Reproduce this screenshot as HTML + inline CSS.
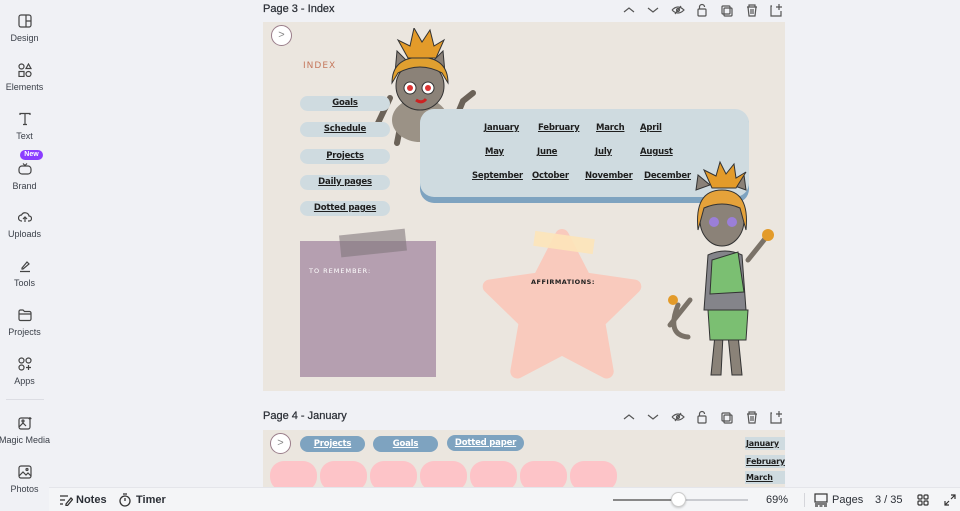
<!DOCTYPE html>
<html><head><meta charset="utf-8"><style>
*{margin:0;padding:0;box-sizing:border-box}
body{width:960px;height:511px;background:#f0f1f5;font-family:"Liberation Sans",sans-serif;position:relative;overflow:hidden;color:#2b2f36}
.abs{position:absolute}
.side{position:absolute;left:-5px;width:59px;text-align:center;font-size:9px;color:#3a3f48;white-space:nowrap}
.side svg{display:block;margin:0 auto 5px}
.hand{font-family:"DejaVu Sans",sans-serif;font-weight:bold;text-decoration:underline;color:#1e1e1e;letter-spacing:-.2px}
.pill{position:absolute;left:300px;width:90px;height:15px;border-radius:8px;background:#cfdbe0;font-size:8.5px;text-align:center;line-height:15px}
.m{position:absolute;font-size:8.5px}
.pink{position:absolute;top:461px;width:47px;height:30px;border-radius:14px;background:#fdc4c8}
.ttl{position:absolute;left:263px;font-size:11px;color:#2b2f36;-webkit-text-stroke:.25px #2b2f36}
</style></head><body>
<!-- sidebar -->
<div class="side" style="top:14px"><svg width="14" height="14" viewBox="0 0 14 14" fill="none" stroke="#444" stroke-width="1.2"><rect x="1" y="1" width="12" height="12" rx="2"/><path d="M8 1v12M8 7h5"/></svg>Design</div>
<div class="side" style="top:63px"><svg width="14" height="14" viewBox="0 0 14 14" fill="none" stroke="#444" stroke-width="1.2"><circle cx="3.5" cy="3.5" r="2.5"/><path d="M10.5 1l2.5 4.5h-5z"/><rect x="1" y="8.5" width="5" height="5"/><circle cx="10.5" cy="11" r="2.5"/></svg>Elements</div>
<div class="side" style="top:112px"><svg width="14" height="14" viewBox="0 0 14 14" fill="none" stroke="#444" stroke-width="1.2"><path d="M2 3V1.5h10V3M7 1.5v11M5 12.5h4"/></svg>Text</div>
<div class="abs" style="left:20px;top:150px;width:23px;height:10px;border-radius:5px;background:#8b3dff;color:#fff;font-size:7px;font-weight:bold;text-align:center;line-height:10px">New</div>
<div class="side" style="top:162px"><svg width="14" height="14" viewBox="0 0 14 14" fill="none" stroke="#444" stroke-width="1.2"><rect x="1" y="4" width="12" height="8" rx="3"/><path d="M5 1.5l2 2 2-2"/></svg>Brand</div>
<div class="side" style="top:210px"><svg width="14" height="14" viewBox="0 0 14 14" fill="none" stroke="#444" stroke-width="1.2"><path d="M4 11H3.5a3 3 0 0 1 0-6 4 4 0 0 1 7.5 1 2.5 2.5 0 0 1 0 5H10M7 12V7M5 9l2-2 2 2"/></svg>Uploads</div>
<div class="side" style="top:259px"><svg width="14" height="14" viewBox="0 0 14 14" fill="none" stroke="#444" stroke-width="1.2"><path d="M4 9l5-6 2 2-6 5H4zM2 12.5h10"/></svg>Tools</div>
<div class="side" style="top:308px"><svg width="14" height="14" viewBox="0 0 14 14" fill="none" stroke="#444" stroke-width="1.2"><path d="M1 3.5a1.5 1.5 0 0 1 1.5-1.5H5l1.5 1.5h5A1.5 1.5 0 0 1 13 5v6a1.5 1.5 0 0 1-1.5 1.5h-9A1.5 1.5 0 0 1 1 11zM1 6h12"/></svg>Projects</div>
<div class="side" style="top:357px"><svg width="14" height="14" viewBox="0 0 14 14" fill="none" stroke="#444" stroke-width="1.2"><circle cx="3.5" cy="3.5" r="2.5"/><circle cx="10.5" cy="3.5" r="2.5"/><circle cx="3.5" cy="10.5" r="2.5"/><path d="M10.5 8v5M8 10.5h5"/></svg>Apps</div>
<div class="abs" style="left:6px;top:399px;width:38px;height:1px;background:#dcdde3"></div>
<div class="side" style="top:416px"><svg width="14" height="14" viewBox="0 0 14 14" fill="none" stroke="#444" stroke-width="1.2"><rect x="1" y="2" width="11" height="11" rx="2"/><path d="M1 11l4-4 3 3M12 1v3M10.5 2.5h3"/><circle cx="5" cy="5" r="1"/></svg>Magic Media</div>
<div class="side" style="top:465px"><svg width="14" height="14" viewBox="0 0 14 14" fill="none" stroke="#444" stroke-width="1.2"><rect x="1" y="1" width="12" height="12" rx="2"/><path d="M1 11l4-4 3 3 2-2 3 3"/><circle cx="9" cy="4.5" r="1"/></svg>Photos</div>

<!-- page 3 header -->
<div class="ttl" style="top:3px">Page 3 - Index</div>
<svg class="abs" style="left:622px;top:3px" width="160" height="14" viewBox="0 0 160 14" fill="none" stroke="#555" stroke-width="1.2">
<path d="M2 9l5-4 5 4M26 5l5 4 5-4"/>
<path d="M50 7q6-6 12 0q-6 6-12 0M53 11l6-8"/><circle cx="56" cy="7" r="1.5"/>
<rect x="76" y="6" width="8" height="7" rx="1"/><path d="M77.5 6V4a2.5 2.5 0 0 1 5 0"/>
<rect x="100" y="3" width="8" height="8" rx="1"/><rect x="102" y="5" width="8" height="8" rx="1"/>
<path d="M125 4h10M127 4V2h6v2M126 4l1 9h6l1-9M129 6v5M131 6v5"/>
<path d="M150 3h-1v10h10V8M154 4h6M157 1v6"/>
</svg>

<!-- page 3 canvas -->
<div class="abs" style="left:263px;top:22px;width:522px;height:369px;background:#ebe6df"></div>
<div class="abs" style="left:271px;top:25px;width:21px;height:21px;border-radius:50%;border:1px solid #9a7d8a;background:#fff;color:#888;font-size:11px;text-align:center;line-height:19px">&gt;</div>
<div class="abs" style="left:303px;top:61px;font-size:9px;color:#c5785d;letter-spacing:1px;font-family:'DejaVu Sans',sans-serif">INDEX</div>

<!-- character 1 -->
<svg class="abs" style="left:370px;top:28px" width="110" height="125" viewBox="0 0 110 125">
<path d="M20 70l-12 25M35 75l-8 40M38 95l50-10 5-12 10-8" stroke="#6b6258" stroke-width="6" fill="none" stroke-linecap="round"/>
<ellipse cx="50" cy="92" rx="28" ry="22" fill="#9b9286"/>
<path d="M25 45l2-22 12 12zM75 45l-2-22-12 12z" fill="#8a8178" stroke="#333"/>
<ellipse cx="50" cy="58" rx="24" ry="24" fill="#8b8278" stroke="#333"/>
<path d="M22 55q0-25 28-26q28 1 28 26l-6-10q-22-12-44 0z" fill="#e0a030" stroke="#333"/>
<path d="M38 30l-10-18 12 6 4-18 8 14 8-12 4 16 10-6-8 18z" fill="#e39b2a" stroke="#333"/>
<circle cx="40" cy="60" r="6" fill="#fff" stroke="#333"/><circle cx="58" cy="60" r="6" fill="#fff" stroke="#333"/>
<circle cx="40" cy="60" r="3" fill="#d33"/><circle cx="58" cy="60" r="3" fill="#d33"/>
<path d="M46 72q6 4 10-1" stroke="#c22" stroke-width="3" fill="none"/>
</svg>

<div class="pill hand" style="top:96px">Goals</div>
<div class="pill hand" style="top:122px">Schedule</div>
<div class="pill hand" style="top:149px">Projects</div>
<div class="pill hand" style="top:175px">Daily pages</div>
<div class="pill hand" style="top:201px">Dotted pages</div>

<!-- months box -->
<div class="abs" style="left:420px;top:110px;width:329px;height:93px;border-radius:14px;background:#7ea3c0"></div>
<div class="abs" style="left:420px;top:109px;width:329px;height:88px;border-radius:14px;background:#cfdbe0"></div>
<div class="m hand" style="left:484px;top:123px">January</div>
<div class="m hand" style="left:538px;top:123px">February</div>
<div class="m hand" style="left:596px;top:123px">March</div>
<div class="m hand" style="left:640px;top:123px">April</div>
<div class="m hand" style="left:485px;top:147px">May</div>
<div class="m hand" style="left:537px;top:147px">June</div>
<div class="m hand" style="left:595px;top:147px">July</div>
<div class="m hand" style="left:640px;top:147px">August</div>
<div class="m hand" style="left:472px;top:171px">September</div>
<div class="m hand" style="left:532px;top:171px">October</div>
<div class="m hand" style="left:585px;top:171px">November</div>
<div class="m hand" style="left:644px;top:171px">December</div>

<!-- to remember note -->
<div class="abs" style="left:300px;top:241px;width:136px;height:136px;background:#b59fb0"></div>
<div class="abs" style="left:340px;top:232px;width:66px;height:22px;background:rgba(130,120,125,0.6);transform:rotate(-6deg)"></div>
<div class="abs" style="left:309px;top:267px;font-size:6.5px;color:#fff;letter-spacing:1px;font-family:'DejaVu Sans',sans-serif">TO REMEMBER:</div>

<!-- star -->
<svg class="abs" style="left:480px;top:225px" width="170" height="160" viewBox="480 225 170 160">
<polygon points="562,236 584.3,279.3 634.3,286.5 598.1,321.7 606.7,371.5 562,348 517.3,371.5 525.9,321.7 489.7,286.5 539.7,279.3" fill="#f9cabd" stroke="#f9cabd" stroke-width="14" stroke-linejoin="round"/>
</svg>
<div class="abs" style="left:534px;top:235px;width:60px;height:15px;background:rgba(253,228,185,0.9);transform:rotate(8deg)"></div>
<div class="abs" style="left:531px;top:278px;font-size:6.5px;color:#222;letter-spacing:.5px;font-weight:bold;font-family:'DejaVu Sans',sans-serif">AFFIRMATIONS:</div>

<!-- character 2 -->
<svg class="abs" style="left:660px;top:160px" width="125" height="222" viewBox="0 0 125 222">
<path d="M30 140l-20 25M88 100l20-25M18 145q-12 30 10 32" stroke="#7a7268" stroke-width="5" fill="none" stroke-linecap="round"/>
<path d="M55 175l-4 40h10l2-40zM68 175l4 40h10l-4-40z" fill="#8a8278" stroke="#333"/>
<path d="M48 95q17-8 34 0l4 55h-42z" fill="#84848a" stroke="#333"/>
<path d="M52 100l26-8 6 40-34 2z" fill="#7bbf72" stroke="#333"/>
<path d="M48 150h40l-2 30h-36z" fill="#7bbf72" stroke="#333"/>
<path d="M36 30l2-15 12 10zM86 30l-2-15-12 10z" fill="#8a8178" stroke="#333"/>
<ellipse cx="62" cy="60" rx="22" ry="26" fill="#8b8278" stroke="#333"/>
<path d="M38 70q-4-40 24-40q28 0 24 40l-6-22q-18-8-36 0z" fill="#e5a23a" stroke="#333"/>
<path d="M52 28l-8-18 12 6 4-14 6 12 8-10 2 14 10-6-10 16z" fill="#e39b2a" stroke="#333"/>
<circle cx="54" cy="62" r="5" fill="#9b7fd8"/><circle cx="72" cy="62" r="5" fill="#9b7fd8"/>
<circle cx="13" cy="140" r="5" fill="#e39b2a"/><circle cx="108" cy="75" r="6" fill="#e39b2a"/>
</svg>

<!-- page 4 header -->
<div class="ttl" style="top:410px">Page 4 - January</div>
<svg class="abs" style="left:622px;top:410px" width="160" height="14" viewBox="0 0 160 14" fill="none" stroke="#555" stroke-width="1.2">
<path d="M2 9l5-4 5 4M26 5l5 4 5-4"/>
<path d="M50 7q6-6 12 0q-6 6-12 0M53 11l6-8"/><circle cx="56" cy="7" r="1.5"/>
<rect x="76" y="6" width="8" height="7" rx="1"/><path d="M77.5 6V4a2.5 2.5 0 0 1 5 0"/>
<rect x="100" y="3" width="8" height="8" rx="1"/><rect x="102" y="5" width="8" height="8" rx="1"/>
<path d="M125 4h10M127 4V2h6v2M126 4l1 9h6l1-9M129 6v5M131 6v5"/>
<path d="M150 3h-1v10h10V8M154 4h6M157 1v6"/>
</svg>
<div class="abs" style="left:263px;top:430px;width:522px;height:57px;background:#ebe6df;overflow:hidden"></div>
<div class="abs" style="left:270px;top:433px;width:21px;height:21px;border-radius:50%;border:1px solid #9a7d8a;background:#fff;color:#888;font-size:11px;text-align:center;line-height:19px">&gt;</div>
<div class="abs hand" style="left:300px;top:436px;width:65px;height:16px;border-radius:8px;background:#7ea3c0;color:#fff;font-size:8.5px;text-align:center;line-height:16px">Projects</div>
<div class="abs hand" style="left:373px;top:436px;width:65px;height:16px;border-radius:8px;background:#7ea3c0;color:#fff;font-size:8.5px;text-align:center;line-height:16px">Goals</div>
<div class="abs hand" style="left:447px;top:435px;width:77px;height:16px;border-radius:8px;background:#7ea3c0;color:#fff;font-size:8.5px;text-align:center;line-height:16px">Dotted paper</div>
<div class="abs hand" style="left:745px;top:437px;width:40px;height:13px;background:#cfdbe0;font-size:8px;line-height:13px;padding-left:1px;overflow:hidden;white-space:nowrap">January</div>
<div class="abs hand" style="left:745px;top:455px;width:40px;height:13px;background:#cfdbe0;font-size:8px;line-height:13px;padding-left:1px;overflow:hidden;white-space:nowrap">February</div>
<div class="abs hand" style="left:745px;top:471px;width:40px;height:13px;background:#cfdbe0;font-size:8px;line-height:13px;padding-left:1px;overflow:hidden;white-space:nowrap">March</div>
<div class="pink" style="left:270px"></div><div class="pink" style="left:320px"></div><div class="pink" style="left:370px"></div><div class="pink" style="left:420px"></div><div class="pink" style="left:470px"></div><div class="pink" style="left:520px"></div><div class="pink" style="left:570px"></div>

<!-- bottom bar -->
<div class="abs" style="left:49px;top:487px;width:911px;height:24px;background:#f4f5f7;border-top:1px solid #e4e5ea"></div>
<svg class="abs" style="left:59px;top:494px" width="14" height="12" viewBox="0 0 14 12" fill="none" stroke="#333" stroke-width="1.3"><path d="M1 2h8M1 6h5M1 10h3M7 10l5-6 1.5 1.5-5 6H7z"/></svg>
<div class="abs" style="left:76px;top:494px;font-size:11px;font-weight:bold;color:#2b2f36">Notes</div>
<svg class="abs" style="left:119px;top:493px" width="12" height="14" viewBox="0 0 12 14" fill="none" stroke="#333" stroke-width="1.3"><circle cx="6" cy="8" r="5"/><path d="M4 1h4M6 5v3"/></svg>
<div class="abs" style="left:136px;top:494px;font-size:11px;font-weight:bold;color:#2b2f36">Timer</div>
<div class="abs" style="left:613px;top:499px;width:135px;height:2px;background:#c9cbd0"></div>
<div class="abs" style="left:613px;top:499px;width:65px;height:2px;background:#888"></div>
<div class="abs" style="left:671px;top:492px;width:15px;height:15px;border-radius:50%;background:#fff;border:1px solid #ccc;box-shadow:0 1px 2px rgba(0,0,0,.2)"></div>
<div class="abs" style="left:766px;top:494px;font-size:11px;color:#2b2f36">69%</div>
<div class="abs" style="left:804px;top:493px;width:1px;height:14px;background:#d5d6db"></div>
<svg class="abs" style="left:814px;top:493px" width="14" height="14" viewBox="0 0 14 14" fill="none" stroke="#333" stroke-width="1.2"><rect x="1" y="1" width="12" height="8"/><path d="M1 11h12M1 13h3M5.5 13h3M10 13h3"/></svg>
<div class="abs" style="left:832px;top:494px;font-size:11px;color:#2b2f36">Pages</div>
<div class="abs" style="left:875px;top:494px;font-size:11px;color:#2b2f36">3 / 35</div>
<svg class="abs" style="left:917px;top:494px" width="12" height="12" viewBox="0 0 12 12" fill="none" stroke="#333" stroke-width="1.2"><rect x="1" y="1" width="4" height="4" rx="1"/><rect x="7" y="1" width="4" height="4" rx="1"/><rect x="1" y="7" width="4" height="4" rx="1"/><rect x="7" y="7" width="4" height="4" rx="1"/></svg>
<svg class="abs" style="left:944px;top:494px" width="12" height="12" viewBox="0 0 12 12" fill="none" stroke="#333" stroke-width="1.2"><path d="M7 1h4v4M11 1L7 5M5 11H1V7M1 11l4-4"/></svg>
</body></html>
